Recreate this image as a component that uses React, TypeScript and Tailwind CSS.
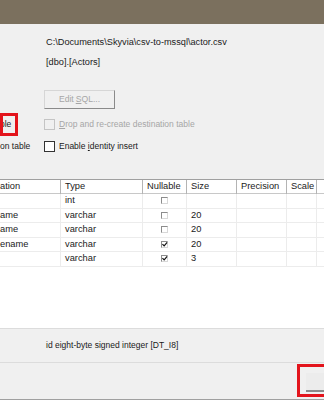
import React from 'react';

const rows = [
  { name: '', type: 'int', nullable: false, size: '' },
  { name: 'ame', type: 'varchar', nullable: false, size: '20' },
  { name: 'ame', type: 'varchar', nullable: false, size: '20' },
  { name: 'ename', type: 'varchar', nullable: true, size: '20' },
  { name: '', type: 'varchar', nullable: true, size: '3' },
];

const Box = ({ disabled = false }: { disabled?: boolean }) => (
  <div
    className={`w-[11px] h-[11px] border ${disabled ? 'border-[#c4c4c4] bg-[#f0f0f0]' : 'border-[#333] bg-white'}`}
  />
);

const MiniBox = ({ checked }: { checked: boolean }) => (
  <div className="w-[7px] h-[7px] border border-[#8c8c8c] border-r-[#d8d8d8] border-b-[#d8d8d8] bg-white relative">
    {checked && (
      <svg viewBox="0 0 7 7" className="absolute left-0 top-0 w-[6px] h-[6px]">
        <path d="M0.5 2.5 L2.5 4.5 L6 0.5" stroke="#111" strokeWidth="1.4" fill="none" />
      </svg>
    )}
  </div>
);

const cols = 'grid grid-cols-[61px_82px_44px_50px_50px_30px]';

export default function App() {
  return (
    <div className="w-[324px] h-[400px] bg-[#f0f0f0] overflow-hidden flex flex-col font-['Liberation_Sans',Arial,sans-serif] text-[#1a1a1a]">
      <div className="h-[24px] bg-[#7b705e] shrink-0" />

      <div className="flex flex-col pl-[46px] pt-[12px] text-[9.2px] leading-[13px]">
        <div className="h-[13px]">C:\Documents\Skyvia\csv-to-mssql\actor.csv</div>
        <div className="h-[13px] mt-[7px]">[dbo].[Actors]</div>
        <div className="mt-[21px] ml-[-2px] w-[71px] h-[19px] border border-[#d6d6d6] border-r-[#8a8a8a] border-b-[#8a8a8a] flex items-center justify-center text-[8.6px] text-[#a6a6a6]">
          Edit <span className="underline ml-[2px]">S</span>QL...
        </div>
      </div>

      <div className="flex items-center mt-[4px] h-[23px] text-[8.5px]">
        <div className="w-[18px] h-[23px] border-[3px] border-[#e3141c] flex items-center overflow-hidden">
          <span className="ml-[-3px]">ble</span>
        </div>
        <div className="ml-[26px] flex items-center gap-[4px] text-[#a6a6a6]">
          <Box disabled />
          <span><span className="underline">D</span>rop and re-create destination table</span>
        </div>
      </div>

      <div className="flex items-center h-[21px] text-[8.5px]">
        <div className="w-[44px] overflow-hidden whitespace-nowrap">on table</div>
        <div className="flex items-center gap-[4px]">
          <Box />
          <span>Enable <span className="underline">i</span>dentity insert</span>
        </div>
      </div>

      <div className="mt-[22px] border-t border-[#a0a0a0] bg-white h-[149px] shrink-0 text-[9.3px]">
        <div className={`${cols} h-[14px] border-b border-[#c8c8c8] items-center`}>
          {['ation', 'Type', 'Nullable', 'Size', 'Precision', 'Scale'].map((h, i) => (
            <div key={h} className={`h-full flex items-center px-[4px] border-r border-[#b4b4b4] ${i === 0 ? 'pl-0' : ''}`}>
              {h}
            </div>
          ))}
        </div>
        {rows.map((r, i) => (
          <div key={i} className={`${cols} h-[14.5px] border-b border-[#ececec]`}>
            <div className="flex items-center border-r border-[#ececec]">{r.name}</div>
            <div className="flex items-center px-[4px] border-r border-[#ececec]">{r.type}</div>
            <div className="flex items-center justify-center border-r border-[#ececec]">
              <MiniBox checked={r.nullable} />
            </div>
            <div className="flex items-center px-[4px] border-r border-[#ececec]">{r.size}</div>
            <div className="border-r border-[#ececec]" />
            <div className="border-r border-[#ececec]" />
          </div>
        ))}
      </div>

      <div className="h-[35px] border-t border-[#dcdcdc] border-b border-[#a8a8a8] flex items-center pl-[46px] text-[8.5px] shrink-0">
        id eight-byte signed integer [DT_I8]
      </div>

      <div className="flex-1 flex justify-end items-start border-b border-[#a0a0a0]">
        <div className="mt-[1px] w-[27px] h-[33px] border-[3px] border-r-0 border-[#e3141c] pl-[6px] pt-[6px]">
          <div className="h-[19px] border-b-2 border-[#8a8a8a] bg-[#ececec]" />
        </div>
      </div>
    </div>
  );
}
